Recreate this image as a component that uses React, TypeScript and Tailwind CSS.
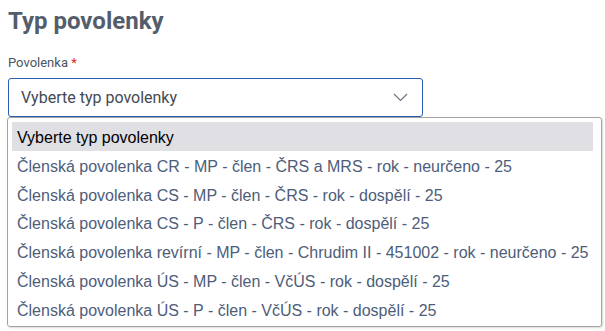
import React from "react";

const OPTIONS = [
  "Členská povolenka CR - MP - člen - ČRS a MRS - rok - neurčeno - 25",
  "Členská povolenka CS - MP - člen - ČRS - rok - dospělí - 25",
  "Členská povolenka CS - P - člen - ČRS - rok - dospělí - 25",
  "Členská povolenka revírní - MP - člen - Chrudim II - 451002 - rok - neurčeno - 25",
  "Členská povolenka ÚS - MP - člen - VčÚS - rok - dospělí - 25",
  "Členská povolenka ÚS - P - člen - VčÚS - rok - dospělí - 25",
];

export default function App() {
  return (
    <div className="w-[605px] h-[331px] bg-white overflow-hidden font-['Roboto',sans-serif]">
      <div className="pl-2 pt-[5px]">
        <h1 className="text-[24px] leading-[32px] font-bold text-[#535d6b]">Typ povolenky</h1>
        <label className="block mt-[18px] text-[13px] leading-[16px] text-[#4b5563]">
          Povolenka <span className="text-[#dc2626]">*</span>
        </label>
        {/* select */}
        <div className="mt-[7px] w-[415px] h-[39px] border border-[#2a5cb8] rounded-[3px] flex items-center justify-between pl-3 pr-[14px]">
          <span className="text-[16px] text-[#434a54]">Vyberte typ povolenky</span>
          <svg width="15" height="9" viewBox="0 0 15 9" fill="none">
            <path d="M1 1l6.5 6.5L14 1" stroke="#6b7280" strokeWidth="1.1" />
          </svg>
        </div>
      </div>
      {/* dropdown list */}
      <div className="ml-[7px] w-[595px] h-[210px] border border-[#a3a3a3] rounded-[3px] shadow-[1px_1px_2px_rgba(0,0,0,0.15)] pt-[4px] pl-1 pr-1 font-['Liberation_Sans',Arial,sans-serif] text-[16px]">
        <div className="h-[29px] bg-[#dfdfe4] flex items-center pl-[5px] pt-[2px] mr-[4px] text-black">
          Vyberte typ povolenky
        </div>
        {OPTIONS.map((o) => (
          <div key={o} className="h-[28.8px] flex items-center pl-[5px] pt-[3px] text-[#4e5d7a] whitespace-nowrap">
            {o}
          </div>
        ))}
      </div>
    </div>
  );
}
